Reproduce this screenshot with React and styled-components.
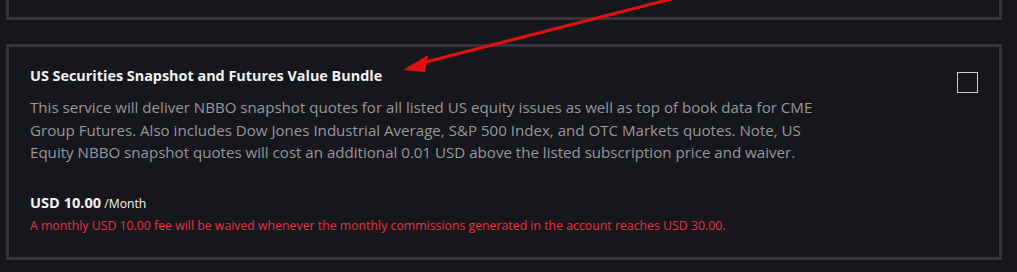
import React from "react";
import styled, { createGlobalStyle } from "styled-components";

const Global = createGlobalStyle`
  html, body { margin: 0; padding: 0; background: #16171d; }
  body { font-family: "Open Sans", Lato, sans-serif; overflow: hidden; }
`;

const Page = styled.div`
  position: relative;
  width: 1017px;
  height: 272px;
  padding: 0 15px 0 6px;
  box-sizing: border-box;
  display: flex;
  flex-direction: column;
  gap: 24px;
`;

const Card = styled.section`
  box-sizing: border-box;
  border: 3px solid #34353d;
  border-top: ${(p) => (p.$clipped ? "none" : "3px solid #34353d")};
  background: #16171d;
  height: ${(p) => (p.$clipped ? "20px" : "auto")};
  display: flex;
  align-items: flex-start;
  padding: ${(p) => (p.$clipped ? "0" : "19px 21px 23px 21px")};
`;

const Content = styled.div`
  flex: 1;
  display: flex;
  flex-direction: column;
`;

const Title = styled.h3`
  margin: 0;
  font-size: 14.4px;
  font-weight: 700;
  color: #f2f2f2;
  line-height: 20px;
`;

const Description = styled.p`
  margin: 10px 0 0 0;
  font-size: 15.1px;
  line-height: 22.5px;
  color: #96969c;
  font-weight: 400;
  white-space: nowrap;
`;

const Price = styled.div`
  margin-top: 28px;
  color: #f2f2f2;
  font-size: 14.6px;
  font-weight: 700;
  line-height: 20px;
`;

const Period = styled.span`
  font-size: 12.2px;
  font-weight: 400;
  margin-left: 3px;
`;

const Note = styled.div`
  margin-top: 3px;
  color: #e5343f;
  font-size: 12.3px;
  line-height: 17px;
`;

const Checkbox = styled.span`
  flex: none;
  width: 21px;
  height: 21px;
  box-sizing: border-box;
  border: 1.5px solid #cfcfd2;
  margin-top: 6px;
`;

const Arrow = styled.svg`
  position: absolute;
  left: 0;
  top: 0;
  pointer-events: none;
`;

export default function App() {
  return (
    <>
      <Global />
      <Page>
        <Card $clipped />
        <Card>
          <Content>
            <Title>US Securities Snapshot and Futures Value Bundle</Title>
            <Description>
              This service will deliver NBBO snapshot quotes for all listed US equity issues as well as top of book data for CME
              <br />
              Group Futures. Also includes Dow Jones Industrial Average, S&amp;P 500 Index, and OTC Markets quotes. Note, US
              <br />
              Equity NBBO snapshot quotes will cost an additional 0.01 USD above the listed subscription price and waiver.
            </Description>
            <Price>
              USD 10.00<Period>/Month</Period>
            </Price>
            <Note>
              A monthly USD 10.00 fee will be waived whenever the monthly commissions generated in the account reaches USD 30.00.
            </Note>
          </Content>
          <Checkbox />
        </Card>
        <Arrow width="1017" height="272" viewBox="0 0 1017 272">
          <line x1="675" y1="-2" x2="418" y2="64" stroke="#e3100f" strokeWidth="3" strokeLinecap="round" />
          <polygon points="403,70 428,55 425,72" fill="#e3100f" />
        </Arrow>
      </Page>
    </>
  );
}
